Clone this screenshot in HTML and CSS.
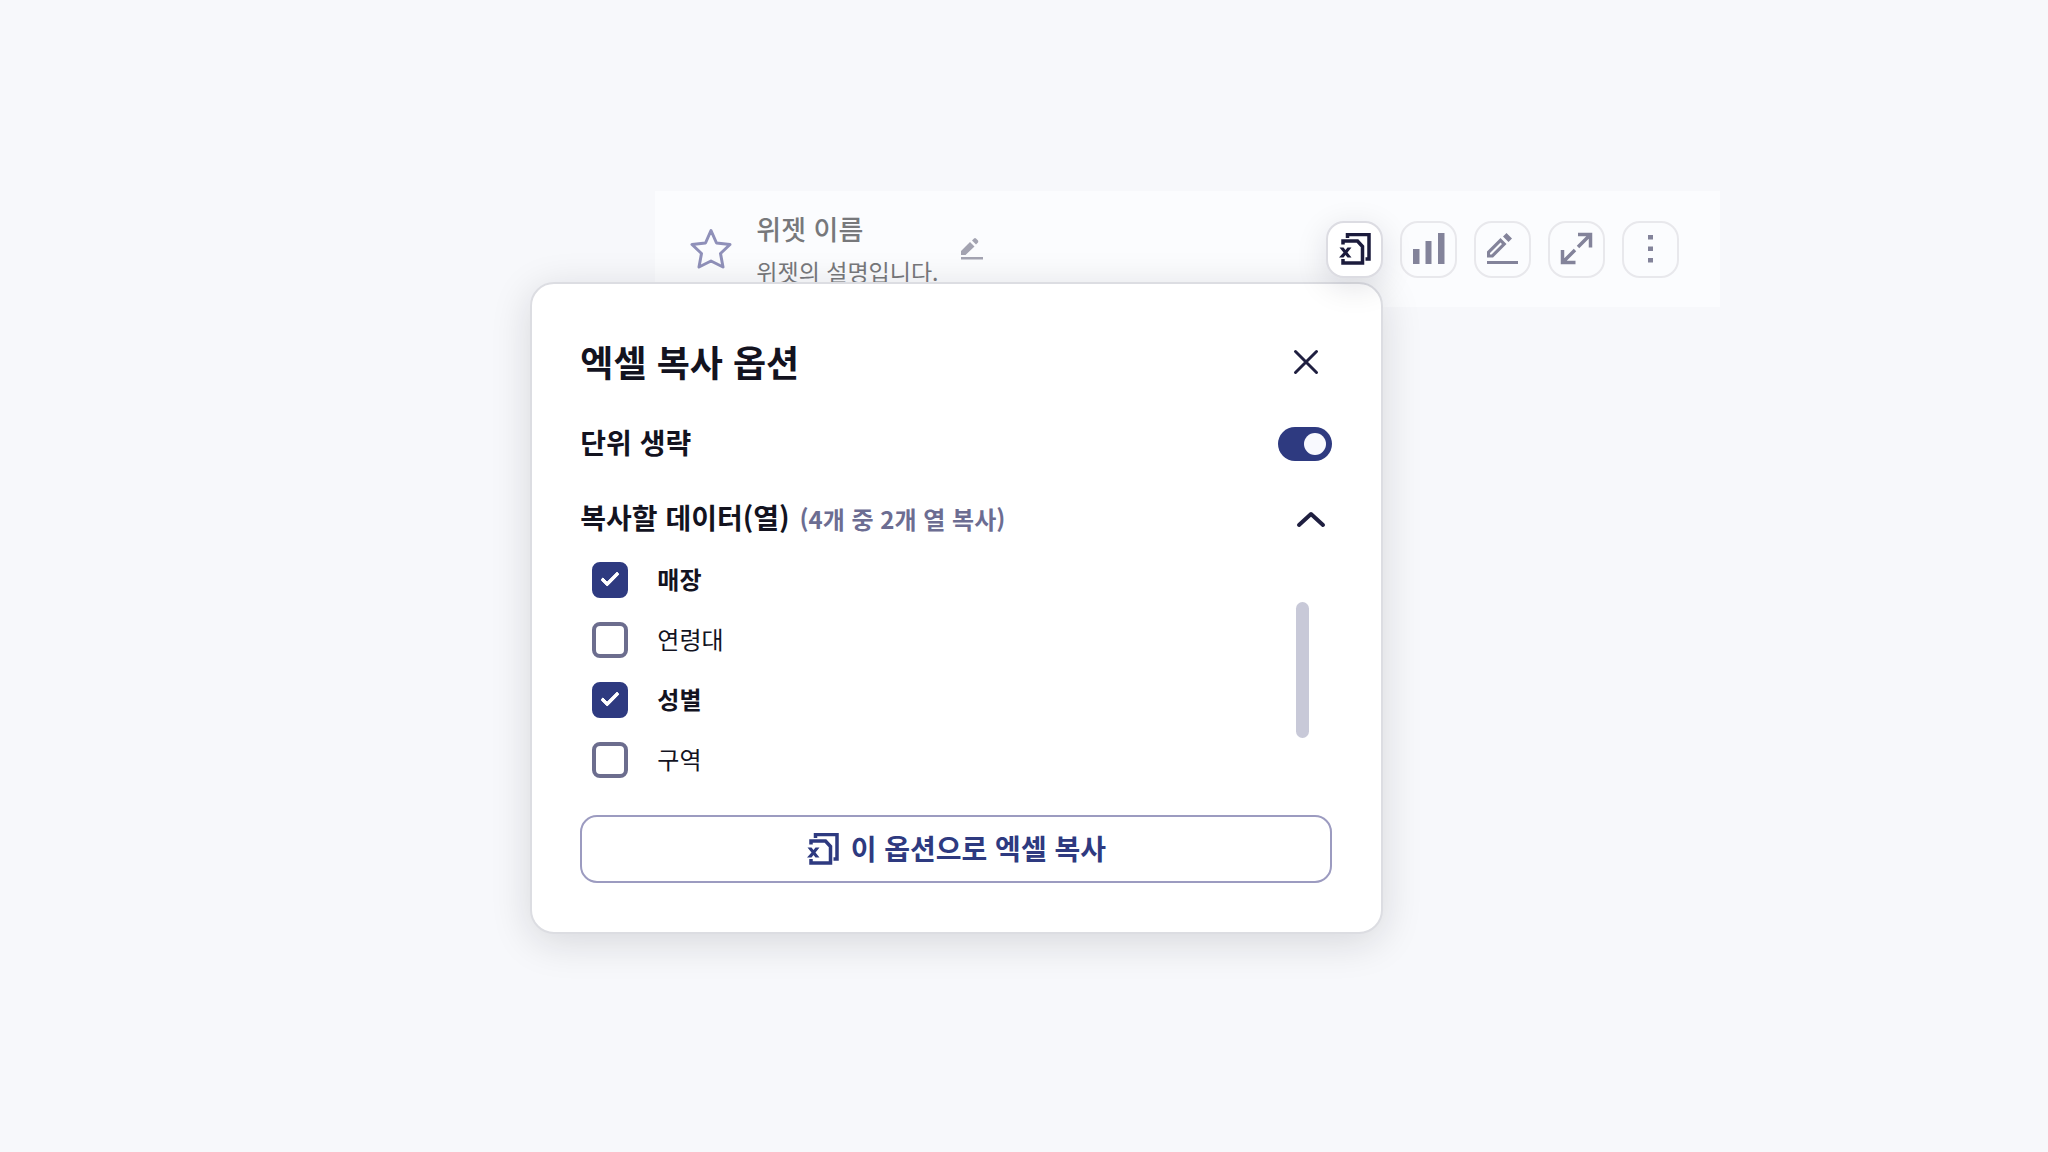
FILE: index.html
```
<!DOCTYPE html>
<html lang="ko">

<head>
    <meta charset="UTF-8">
    <meta name="viewport" content="width=device-width, initial-scale=1.0">
    <title>엑셀 복사 옵션</title>
    <link rel="stylesheet" href="styles.css">
</head>

<body>
    <svg width="0" height="0" class="defs" aria-hidden="true">
        <symbol id="icon-excel" viewBox="0 0 32 32">
            <path d="M8.500 5V1.500H30V26H26.500" fill="none" stroke="currentColor" stroke-width="3.500" />
            <path d="M4 11.500V8H18.500L23.500 13.500V30H4V26" fill="none" stroke="currentColor" stroke-width="3.500" />
            <path d="M0.500 14.500H4.500L6.500 17L8.500 14.500H12.500L8.500 19.500L12.500 24.500H8.500L6.500 22L4.500 24.500H0L4.500 19.500Z" fill="currentColor" />
        </symbol>
    </svg>
    <main class="page">
        <header class="widget">
            <button class="star" aria-label="즐겨찾기">
                <svg width="42" height="42" viewBox="0 0 42 42">
                    <path d="M21 2.500L26.500 15L40 16.500L30.500 25.500L33 39L21 33L9 39L11.500 25.500L2 16.500L15.500 15Z" />
                </svg>
            </button>
            <div class="widget-text">
                <h1>위젯 이름</h1>
                <p>위젯의 설명입니다.</p>
            </div>
            <button class="rename" aria-label="이름 수정">
                <svg width="22" height="22" viewBox="0 0 22 22" fill="currentColor">
                    <path d="M0 13L9 4L13.500 8.500L4.500 17H0ZM11 2.500L13 .500Q14 -.500 15 .500L17 2.500Q17.500 3.500 17 4.500L15 6.500ZM0 19H22V21.500H0Z" />
                </svg>
            </button>
            <div class="tools">
                <div class="excel">
                    <button class="tool active" aria-label="엑셀 복사">
                        <svg width="32" height="32"><use href="#icon-excel" /></svg>
                    </button>
                    <section class="popup" role="dialog" aria-labelledby="popup-title">
                        <div class="popup-head">
                            <h2 id="popup-title">엑셀 복사 옵션</h2>
                            <button class="close" aria-label="닫기">
                                <svg width="24" height="24" viewBox="0 0 24 24"><path d="M1.500 1.500L22.500 22.500M22.500 1.500L1.500 22.500" /></svg>
                            </button>
                        </div>
                        <div class="row">
                            <label for="unit">단위 생략</label>
                            <input type="checkbox" role="switch" id="unit" class="switch" checked>
                        </div>
                        <div class="row">
                            <h3>복사할 데이터(열) <span>(4개 중 2개 열 복사)</span></h3>
                            <button class="fold" aria-label="접기">
                                <svg width="30" height="18" viewBox="0 0 30 18"><path d="M3 15L15 4L27 15" /></svg>
                            </button>
                        </div>
                        <div class="columns">
                            <ul>
                                <li><label><input type="checkbox" checked><span>매장</span></label></li>
                                <li><label><input type="checkbox"><span>연령대</span></label></li>
                                <li><label><input type="checkbox" checked><span>성별</span></label></li>
                                <li><label><input type="checkbox"><span>구역</span></label></li>
                            </ul>
                            <div class="thumb"></div>
                        </div>
                        <button class="copy">
                            <svg width="32" height="32"><use href="#icon-excel" /></svg>
                            <span>이 옵션으로 엑셀 복사</span>
                        </button>
                    </section>
                </div>
                <button class="tool" aria-label="차트">
                    <svg width="32" height="32" viewBox="0 0 32 32" fill="currentColor">
                        <path d="M0 16H6.500V31H0ZM12.500 8H18.500V31H12.500ZM25 0H31.500V31H25Z" />
                    </svg>
                </button>
                <button class="tool" aria-label="편집">
                    <svg width="32" height="32" viewBox="0 0 32 32" fill="currentColor">
                        <path fill-rule="evenodd" d="M0 18.500L13.500 5L19.500 11L6 24.500H0ZM3 21.500H4.500L15 11L13.500 9.500L3 20ZM16 3.500L19.500 0L25 5.500L21.500 9ZM0 28H31V31H0Z" />
                    </svg>
                </button>
                <button class="tool" aria-label="확대">
                    <svg width="32" height="32" viewBox="0 0 32 32" fill="none" stroke="currentColor" stroke-width="3.500">
                        <path d="M17 1.500H29.500V14.500M29.500 1.500L17 14M1.500 17V29.500H14.500M1.500 29.500L14 17" />
                    </svg>
                </button>
                <button class="tool" aria-label="더보기">
                    <svg width="32" height="32" viewBox="0 0 32 32" fill="currentColor">
                        <path d="M13 2H18V6.500H13ZM13 13.500H18V18H13ZM13 25H18V29.500H13Z" />
                    </svg>
                </button>
            </div>
        </header>
    </main>
</body>

</html>
```
FILE: styles.css
```
*,
*::before {
    box-sizing: border-box;
    margin: 0;
    padding: 0;
}

body {
    min-height: 100vh;
    background-color: #f7f8fb;
    color: #13131f;
    font-family: "Noto Sans CJK KR", sans-serif;
    font-size: 24px;
}

button {
    border: none;
    background: none;
    font: inherit;
    color: inherit;
    cursor: pointer;
}

svg {
    display: block;
    flex: none;
    overflow: visible;
}

.defs {
    position: absolute;
}

.page {
    padding: 191px 16% 0 32%;
}

.widget {
    display: flex;
    align-items: center;
    padding: 16px 41px 16px 35px;
    background-color: #fbfcfe;
}

.star {
    margin-right: 24px;
}

.star path {
    fill: none;
    stroke: #8f90b9;
    stroke-width: 3;
    stroke-linejoin: round;
}

.widget-text {
    color: #77787b;
}

.widget-text h1 {
    font-size: 27px;
    font-weight: 500;
    line-height: 44px;
}

.widget-text p {
    font-size: 23px;
    line-height: 40px;
}

.rename {
    margin-left: 22px;
    color: #a3a3b1;
}

.tools {
    display: flex;
    gap: 17px;
    margin-left: auto;
}

.tool {
    display: flex;
    align-items: center;
    justify-content: center;
    width: 57px;
    height: 57px;
    border: 2px solid #e8e8ec;
    border-radius: 18px;
    color: #83839a;
}

.excel {
    position: relative;
}

.active {
    position: relative;
    z-index: 2;
    border-color: #dcdce2;
    background-color: #fff;
    color: #1b1b3c;
    box-shadow: 0 8px 32px rgba(20, 20, 40, 0.12);
}

.popup {
    position: absolute;
    z-index: 1;
    top: 61px;
    right: 0;
    width: 853px;
    padding: 54px 49px 49px 48px;
    border: 2px solid #dcdde2;
    border-radius: 24px;
    background-color: #fff;
    box-shadow: 0 8px 40px rgba(20, 20, 30, 0.14);
}

.popup-head,
.row {
    display: flex;
    align-items: center;
    justify-content: space-between;
}

.popup-head {
    height: 48px;
    margin-bottom: 40px;
}

h2 {
    padding-bottom: 2px;
    font-size: 36px;
    font-weight: 700;
}

.close {
    padding: 2px 14px;
}

.close path,
.fold path {
    fill: none;
    stroke: #1f1f40;
    stroke-width: 3;
    stroke-linecap: round;
    stroke-linejoin: round;
}

.row {
    height: 36px;
    font-size: 28px;
    font-weight: 600;
}

.row + .row {
    margin-top: 39px;
}

.row label,
.row h3 {
    padding-bottom: 4px;
}

.row h3 {
    font-size: 28px;
    font-weight: 600;
}

.row h3 span {
    margin-left: 2px;
    color: #6c6d92;
    font-size: 24px;
}

.fold {
    padding: 8px 6px;
}

.fold path {
    stroke-width: 4;
}

input {
    appearance: none;
    cursor: pointer;
}

.switch {
    width: 54px;
    height: 34px;
    padding: 6px;
    border-radius: 17px;
    background-color: #c9c9d8;
}

.switch::before {
    content: "";
    display: block;
    width: 22px;
    height: 22px;
    border-radius: 50%;
    background-color: #f8f9fe;
}

.switch:checked {
    background-color: #2e3a80;
}

.switch:checked::before {
    margin-left: auto;
}

.columns {
    display: flex;
    align-items: center;
    justify-content: space-between;
    margin-top: 13px;
    padding: 0 23px 0 12px;
}

ul {
    list-style: none;
}

li label {
    display: flex;
    align-items: center;
    gap: 29px;
    height: 60px;
}

li span {
    padding-bottom: 2px;
}

li input {
    width: 36px;
    height: 36px;
    border: 4px solid #6c6d8e;
    border-radius: 8px;
}

li input:checked {
    border-color: #2e3a80;
    background-color: #2e3a80;
}

li input:checked::before {
    content: "";
    display: block;
    width: 18px;
    height: 10px;
    margin: 6px 5px;
    border-bottom: 4px solid #fff;
    border-left: 4px solid #fff;
    border-radius: 2px;
    transform: rotate(-45deg);
}

li input:checked + span {
    font-weight: 600;
}

.thumb {
    width: 13px;
    height: 136px;
    border-radius: 7px;
    background-color: #c8c9d8;
}

.copy {
    display: flex;
    align-items: center;
    justify-content: center;
    gap: 12px;
    width: 100%;
    height: 68px;
    margin-top: 25px;
    border: 2px solid #9c9bc0;
    border-radius: 17px;
    color: #2e3a80;
    font-size: 28px;
    font-weight: 600;
}

.copy span {
    padding-bottom: 2px;
}
```
